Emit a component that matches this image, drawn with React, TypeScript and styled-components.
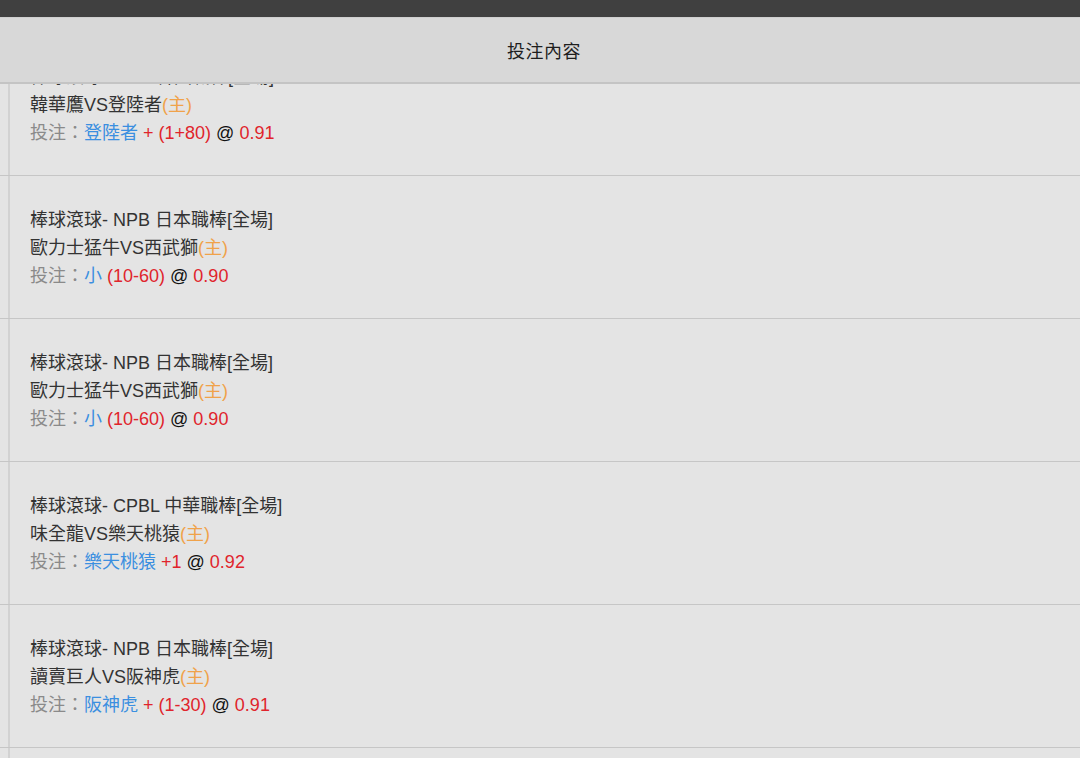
import styled, { createGlobalStyle } from "styled-components";

const GlobalStyle = createGlobalStyle`
  html, body {
    margin: 0;
    padding: 0;
    background: #e4e4e4;
    font-family: "Liberation Sans", Arial, "Noto Sans CJK TC", sans-serif;
  }
`;

type Bet = {
  league: string;
  home: string;
  away: string;
  pick: string;
  line: string;
  odds: string;
};

const bets: Bet[] = [
  { league: "棒球滾球- KBO 韓國職棒[全場]", home: "韓華鷹", away: "登陸者", pick: "登陸者", line: "+ (1+80)", odds: "0.91" },
  { league: "棒球滾球- NPB 日本職棒[全場]", home: "歐力士猛牛", away: "西武獅", pick: "小", line: "(10-60)", odds: "0.90" },
  { league: "棒球滾球- NPB 日本職棒[全場]", home: "歐力士猛牛", away: "西武獅", pick: "小", line: "(10-60)", odds: "0.90" },
  { league: "棒球滾球- CPBL 中華職棒[全場]", home: "味全龍", away: "樂天桃猿", pick: "樂天桃猿", line: "+1", odds: "0.92" },
  { league: "棒球滾球- NPB 日本職棒[全場]", home: "讀賣巨人", away: "阪神虎", pick: "阪神虎", line: "+ (1-30)", odds: "0.91" },
  { league: "棒球滾球- NPB 日本職棒[全場]", home: "讀賣巨人", away: "阪神虎", pick: "阪神虎", line: "+ (1-30)", odds: "0.91" },
];

const Page = styled.div`
  height: 758px;
  display: flex;
  flex-direction: column;
  overflow: hidden;
`;

const TopBar = styled.div`
  height: 17px;
  background: #404040;
  flex-shrink: 0;
`;

const Header = styled.div`
  height: 64px;
  flex-shrink: 0;
  background: #d8d8d8;
  border-top: 1px solid #cfcfcf;
  border-bottom: 2px solid #c4c4c4;
  display: flex;
  align-items: center;
  justify-content: center;
  padding-left: 8px;
  font-size: 18px;
  color: #1e1e1e;
  letter-spacing: 0.5px;
  position: relative;
  z-index: 1;
`;

const Scroller = styled.div`
  flex: 1;
  overflow: hidden;
`;

/* list is scrolled up a little under the header */
const List = styled.div`
  margin-top: -51px;
`;

const Row = styled.div`
  display: flex;
  border-bottom: 1px solid #c6c6c6;
`;

const Gutter = styled.div`
  width: 8px;
  flex-shrink: 0;
  border-right: 2px solid #d2d2d2;
`;

const Content = styled.div`
  padding: 30px 20px 28px 20px;
  font-size: 18px;
  line-height: 28px;
  color: #333;
`;

const Line = styled.div`
  white-space: nowrap;
`;

const Span = styled.span<{ $tone: "home" | "label" | "pick" | "red" | "dark" }>`
  color: ${(p) =>
    p.$tone === "home"
      ? "#f0a24a"
      : p.$tone === "label"
      ? "#8a8a8a"
      : p.$tone === "pick"
      ? "#3b8fe0"
      : p.$tone === "red"
      ? "#e0242c"
      : "#111"};
`;

export default function App() {
  return (
    <>
      <GlobalStyle />
      <Page>
        <TopBar />
        <Header>投注內容</Header>
        <Scroller>
          <List>
            {bets.map((b, i) => (
              <Row key={i}>
                <Gutter />
                <Content>
                  <Line>{b.league}</Line>
                  <Line>
                    {b.home}VS{b.away}
                    <Span $tone="home">(主)</Span>
                  </Line>
                  <Line>
                    <Span $tone="label">投注：</Span>
                    <Span $tone="pick">{b.pick}</Span>{" "}
                    <Span $tone="red">{b.line}</Span>{" "}
                    <Span $tone="dark">@</Span>{" "}
                    <Span $tone="red">{b.odds}</Span>
                  </Line>
                </Content>
              </Row>
            ))}
          </List>
        </Scroller>
      </Page>
    </>
  );
}
